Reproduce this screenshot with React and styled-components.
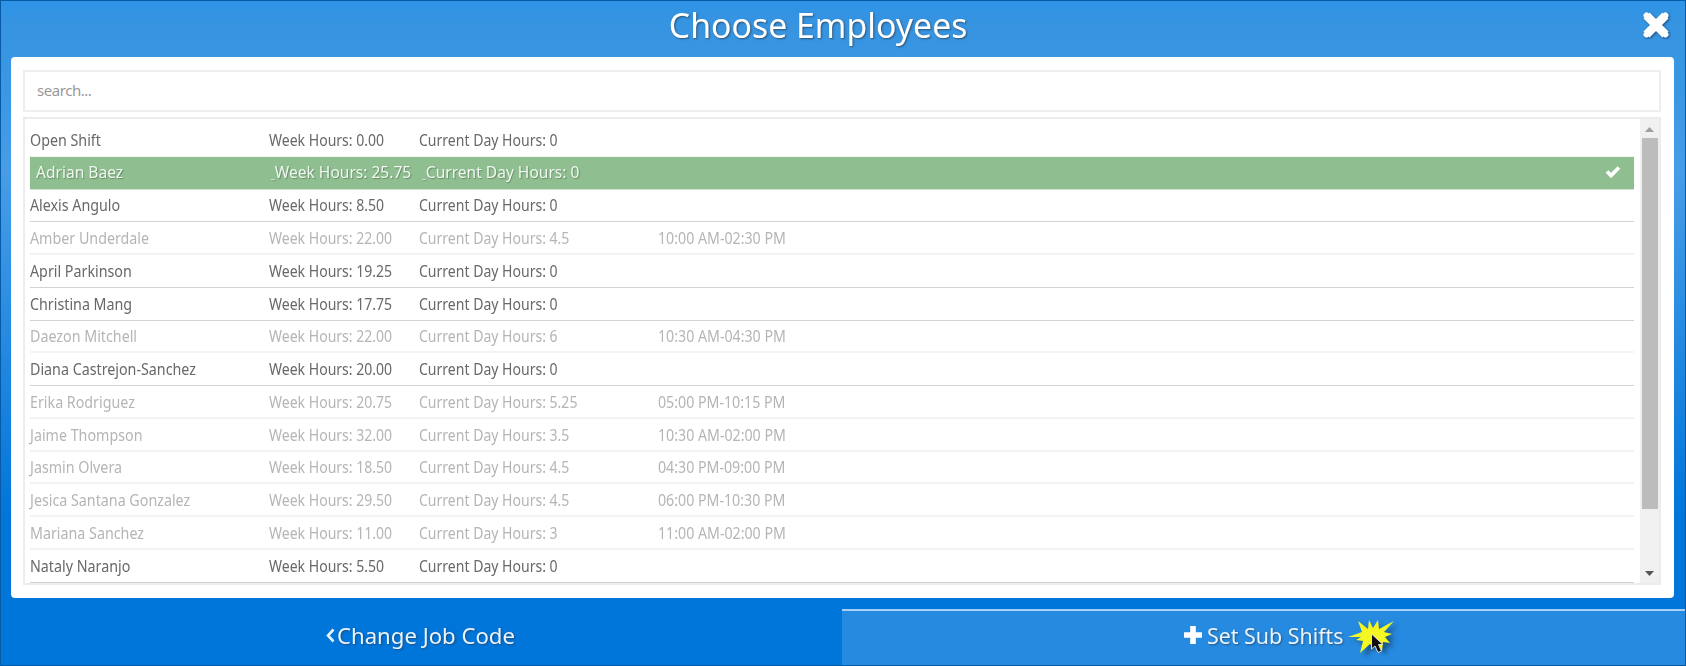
import React from "react";
import styled, { createGlobalStyle } from "styled-components";

const GlobalStyle = createGlobalStyle`
  * { box-sizing: border-box; }
  body { margin: 0; font-family: "Noto Sans", "Open Sans", sans-serif; }
`;

const Dialog = styled.div`
  width: 1686px;
  height: 666px;
  display: flex;
  flex-direction: column;
  overflow: hidden;
  border: 1px solid #075aa6;
  background: linear-gradient(180deg, #2e93e6 0, #3794e1 24px, #3a97e4 90px, #479de7 170px, #0075da 520px, #0075da 100%);
`;

const Header = styled.header`
  height: 56px;
  flex: none;
  display: grid;
  grid-template-columns: 1fr auto 1fr;
  align-items: start;
  padding: 0 14px 0 0;
`;

const Label = styled.span`
  display: inline-block;
  white-space: pre;
  transform: scaleX(${(p) => p.$squeeze || 0.9});
  transform-origin: ${(p) => p.$origin || "left"} center;
`;

const Lead = styled.span`
  font-size: 9px;
`;

const Title = styled.h1`
  grid-column: 2;
  margin: 0 0 0 -35px;
  font-size: 34px;
  line-height: 49px;
  font-weight: 400;
  color: #fff;
  text-shadow: 1px 1px 2px rgba(40, 60, 80, 0.75);
`;

const CloseButton = styled.button`
  justify-self: end;
  border: 0;
  padding: 0;
  margin-top: 9px;
  width: 30px;
  height: 30px;
  background: none;
  svg { display: block; filter: drop-shadow(1px 1px 1px rgba(20, 50, 90, 0.7)); }
`;

const Panel = styled.main`
  height: 541px;
  flex: none;
  margin: 0 11px 0 10px;
  padding: 13px 13px 13px 12px;
  background: #fff;
  border-radius: 4px;
  display: flex;
  flex-direction: column;
  gap: 5px;
`;

const Search = styled.input`
  height: 42px;
  flex: none;
  border: 2px solid #eee;
  padding: 0 11px 2px 12px;
  font: 15px "Noto Sans", sans-serif;
  letter-spacing: -0.45px;
  outline: none;
  background: #fff;
  &::placeholder { color: #999; opacity: 1; }
`;

const ListBox = styled.div`
  flex: 1;
  min-height: 0;
  border: 2px solid #ececec;
  display: flex;
`;

const Rows = styled.div`
  flex: 1;
  overflow: hidden;
  padding: 5px 6px 0 5px;
`;

const Row = styled.div`
  height: 32.75px;
  display: grid;
  grid-template-columns: 239px 150px 239px 1fr 24px;
  align-items: center;
  padding-top: ${(p) => (p.$busy ? 1 : 0)}px;
  font-size: 15.6px;
  border-bottom: ${(p) => (p.$busy ? "2px solid #f3f3f3" : "1px solid #d3d3d3")};
  color: ${(p) => (p.$busy ? "#b5b5b5" : "#686868")};
  ${(p) => p.$first && "border-bottom-color: #edf7ed;"}
  ${(p) => p.$selected && `
    background: #8fbe90;
    border-bottom-color: #cfe4cf;
    color: #f1f8f1;
    padding: 0 0 2px 6px;
    font-size: 16.3px;
    text-shadow: 1px 1px 1px rgba(70, 100, 70, 0.55);
    grid-template-columns: 235px 151px 239px 1fr 29px;
  `}
`;

const Scrollbar = styled.div`
  width: 19px;
  background: #f0f0f0;
  display: flex;
  flex-direction: column;
  align-items: center;
`;

const ScrollArrow = styled.svg`
  width: 19px;
  height: ${(p) => p.$height}px;
  flex: none;
`;

const Thumb = styled.div`
  width: 16px;
  height: 371px;
  flex: none;
  background: #bcbcbc;
`;

const Footer = styled.footer`
  flex: 1;
  display: flex;
  align-items: flex-end;
`;

const FooterButton = styled.button`
  width: ${(p) => (p.$active ? 843 : 841)}px;
  height: 56px;
  flex: none;
  border: 0;
  border-top: 2px solid ${(p) => (p.$active ? "#a6d0f5" : "transparent")};
  padding: ${(p) => p.$pad};
  background: ${(p) => (p.$active ? "#268ae0" : "transparent")};
  color: #e9f4fd;
  font: 21.5px "Noto Sans", sans-serif;
  text-shadow: 1px 1px 2px rgba(40, 60, 80, 0.65);
  display: flex;
  align-items: center;
  svg { flex: none; }
`;

const PlusIcon = styled.svg`
  margin-right: 4px;
`;

const Burst = styled.svg`
  margin: 6px 0 0 4px;
`;

const people = [
  ["Open Shift", "0.00", "0"],
  ["Adrian Baez", "25.75", "0"],
  ["Alexis Angulo", "8.50", "0"],
  ["Amber Underdale", "22.00", "4.5", "10:00 AM-02:30 PM"],
  ["April Parkinson", "19.25", "0"],
  ["Christina Mang", "17.75", "0"],
  ["Daezon Mitchell", "22.00", "6", "10:30 AM-04:30 PM"],
  ["Diana Castrejon-Sanchez", "20.00", "0"],
  ["Erika Rodriguez", "20.75", "5.25", "05:00 PM-10:15 PM"],
  ["Jaime Thompson", "32.00", "3.5", "10:30 AM-02:00 PM"],
  ["Jasmin Olvera", "18.50", "4.5", "04:30 PM-09:00 PM"],
  ["Jesica Santana Gonzalez", "29.50", "4.5", "06:00 PM-10:30 PM"],
  ["Mariana Sanchez", "11.00", "3", "11:00 AM-02:00 PM"],
  ["Nataly Naranjo", "5.50", "0"],
];

function Employee({ person, first, selected }) {
  const [name, week, day, shift] = person;
  const lead = selected && <Lead>_</Lead>;
  return (
    <Row $busy={!!shift} $selected={selected} $first={first}>
      <Label $squeeze={selected ? 0.955 : 0.915}>{name}</Label>
      <Label $squeeze={selected ? 0.955 : 0.9}>{lead}{`Week Hours: ${week}`}</Label>
      <Label $squeeze={selected ? 0.955 : 0.9}>{lead}{`Current Day Hours: ${day}`}</Label>
      <Label $squeeze={0.91}>{shift || ""}</Label>
      {selected && (
        <svg width="16" height="14" viewBox="0 0 16 14">
          <path d="M2 6.500l4 4L14 2.500" fill="none" stroke="#fff" strokeWidth="3.800" />
        </svg>
      )}
    </Row>
  );
}

export default function App() {
  return (
    <>
      <GlobalStyle />
      <Dialog>
        <Header>
          <Title><Label $origin="center" $squeeze={0.995}>Choose Employees</Label></Title>
          <CloseButton aria-label="Close">
            <svg width="30" height="30" viewBox="0 0 30 30">
              <path d="M5.500 5.500l19 19M24.500 5.500l-19 19" stroke="#fff" strokeWidth="8.500" strokeLinecap="butt" />
              <path d="M5.500 5.500l19 19M24.500 5.500l-19 19" stroke="#fff" strokeWidth="6" strokeLinecap="round" />
            </svg>
          </CloseButton>
        </Header>
        <Panel>
          <Search placeholder="search..." />
          <ListBox>
            <Rows>
              {people.map((p, i) => (
                <Employee key={p[0]} person={p} first={i === 0} selected={i === 1} />
              ))}
            </Rows>
            <Scrollbar>
              <ScrollArrow $height={19} viewBox="0 0 19 19"><path d="M5 13l4.500-5 4.500 5z" fill="#a0a0a0" /></ScrollArrow>
              <Thumb />
              <ScrollArrow $height={74} viewBox="0 0 19 74"><path d="M5 62l4.500 5 4.500-5z" fill="#555" /></ScrollArrow>
            </Scrollbar>
          </ListBox>
        </Panel>
        <Footer>
          <FooterButton $pad="0 0 6px 323px">
            <svg width="13" height="20" viewBox="0 0 13 20"><path d="M9.500 4.500L4 10.500 9.500 16.500" fill="none" stroke="#e9f4fd" strokeWidth="2.600" /></svg>
            <Label $squeeze={1.03}>Change Job Code</Label>
          </FooterButton>
          <FooterButton $active $pad="0 0 6px 341px">
            <PlusIcon width="20" height="20" viewBox="0 0 20 20"><path d="M10 1v18M1 10h18" stroke="#fff" strokeWidth="5.600" /></PlusIcon>
            <Label $squeeze={0.995}>Set Sub Shifts</Label>
            <Burst width="54" height="42" viewBox="0 0 54 42">
              <g filter="drop-shadow(4px 4px 2px rgba(20,50,80,.6))">
                <path d="M0 20L14 15 10 4 20 12 21 3 25 11 30 3 31 12 46 4 36 15 44 17 37 20 42 26 35 25 34 34 28 28 25 30 22 27 12 36 15 24 8 23 13 20z" fill="#f4f722" />
              </g>
              <path d="M23.500 17v15l3.500-3 3 6.500 3.500-1.500-3-6.500h4.500z" fill="#111" stroke="#ddd" strokeWidth="1" />
            </Burst>
          </FooterButton>
        </Footer>
      </Dialog>
    </>
  );
}
